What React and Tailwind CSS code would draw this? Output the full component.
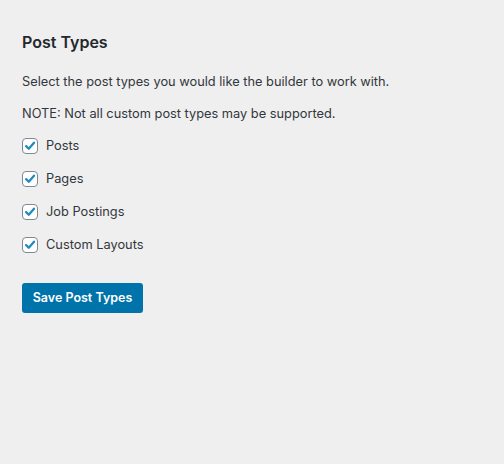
const postTypes = ['Posts', 'Pages', 'Job Postings', 'Custom Layouts'];

function CheckIcon() {
  return (
    <svg viewBox="0 0 16 16" className="w-4 h-4" fill="none">
      <path
        d="M3.6 8.2 L6.6 11.2 L12.6 4.2"
        stroke="#1e8cbe"
        strokeWidth="2.6"
        strokeLinecap="round"
        strokeLinejoin="round"
      />
    </svg>
  );
}

export default function App() {
  return (
    <div
      className="w-[504px] h-[464px] bg-[#efefef] text-[#23282d] px-[22px] pt-[30px]"
      style={{ fontFamily: 'Inter, "Liberation Sans", Arial, sans-serif' }}
    >
      <h2 className="text-[16px] font-semibold leading-[24px] mb-[18px]">Post Types</h2>
      <p className="text-[12.8px] leading-[20px] text-[#32373c] mb-[12px]">
        Select the post types you would like the builder to work with.
      </p>
      <p className="text-[12.8px] leading-[20px] text-[#32373c] mb-[14px]">
        NOTE: Not all custom post types may be supported.
      </p>
      <div className="flex flex-col gap-[17px]">
        {postTypes.map((name) => (
          <label key={name} className="flex items-center gap-[8px] h-[16px]">
            <span className="w-[16px] h-[16px] rounded-[4px] border border-[#7e8993] bg-white flex items-center justify-center">
              <CheckIcon />
            </span>
            <span className="text-[12.8px] text-[#32373c]">{name}</span>
          </label>
        ))}
      </div>
      <button className="mt-[30px] h-[30px] w-[121px] rounded-[3px] bg-[#0073aa] text-white text-[12.5px] font-semibold">
        Save Post Types
      </button>
    </div>
  );
}
